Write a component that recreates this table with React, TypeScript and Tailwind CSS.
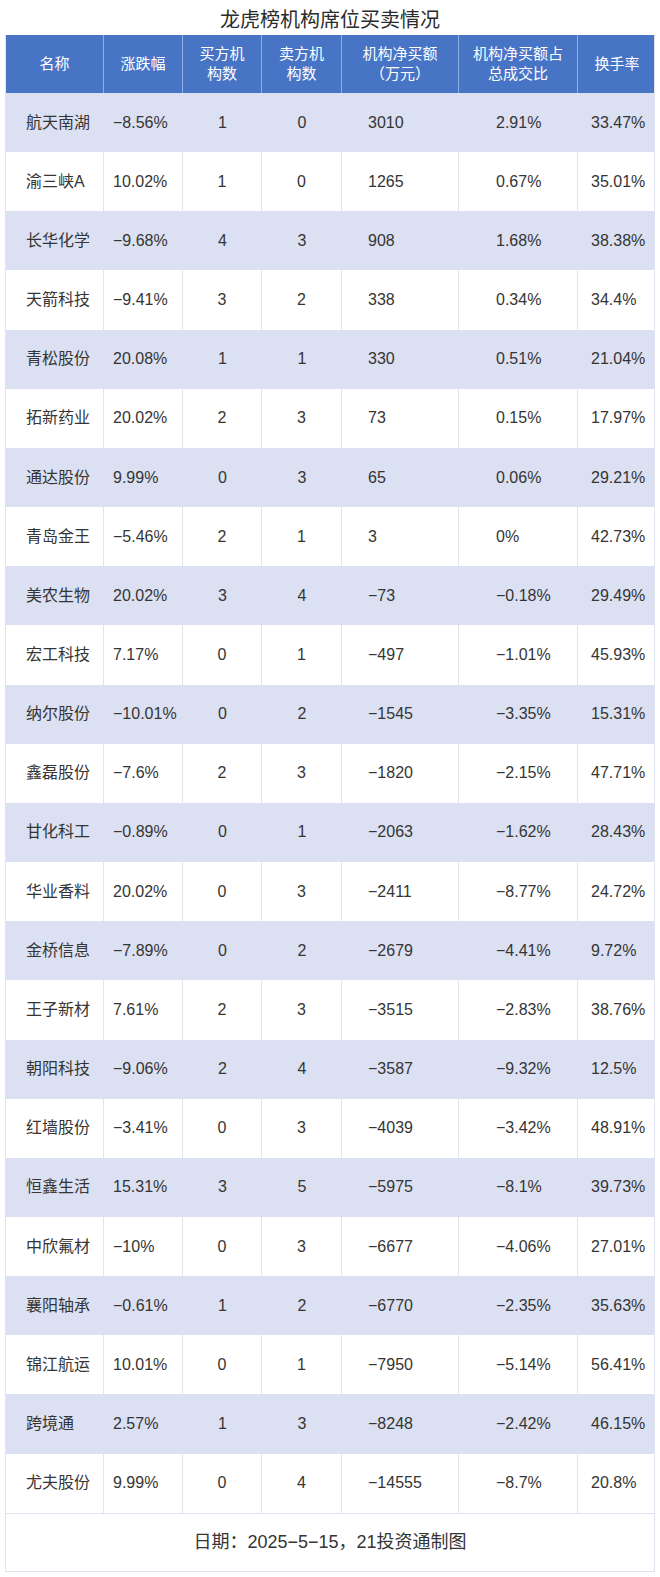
import React from 'react';

const rows: string[][] = [
  ['航天南湖', '−8.56%', '1', '0', '3010', '2.91%', '33.47%'],
  ['渝三峡A', '10.02%', '1', '0', '1265', '0.67%', '35.01%'],
  ['长华化学', '−9.68%', '4', '3', '908', '1.68%', '38.38%'],
  ['天箭科技', '−9.41%', '3', '2', '338', '0.34%', '34.4%'],
  ['青松股份', '20.08%', '1', '1', '330', '0.51%', '21.04%'],
  ['拓新药业', '20.02%', '2', '3', '73', '0.15%', '17.97%'],
  ['通达股份', '9.99%', '0', '3', '65', '0.06%', '29.21%'],
  ['青岛金王', '−5.46%', '2', '1', '3', '0%', '42.73%'],
  ['美农生物', '20.02%', '3', '4', '−73', '−0.18%', '29.49%'],
  ['宏工科技', '7.17%', '0', '1', '−497', '−1.01%', '45.93%'],
  ['纳尔股份', '−10.01%', '0', '2', '−1545', '−3.35%', '15.31%'],
  ['鑫磊股份', '−7.6%', '2', '3', '−1820', '−2.15%', '47.71%'],
  ['甘化科工', '−0.89%', '0', '1', '−2063', '−1.62%', '28.43%'],
  ['华业香料', '20.02%', '0', '3', '−2411', '−8.77%', '24.72%'],
  ['金桥信息', '−7.89%', '0', '2', '−2679', '−4.41%', '9.72%'],
  ['王子新材', '7.61%', '2', '3', '−3515', '−2.83%', '38.76%'],
  ['朝阳科技', '−9.06%', '2', '4', '−3587', '−9.32%', '12.5%'],
  ['红墙股份', '−3.41%', '0', '3', '−4039', '−3.42%', '48.91%'],
  ['恒鑫生活', '15.31%', '3', '5', '−5975', '−8.1%', '39.73%'],
  ['中欣氟材', '−10%', '0', '3', '−6677', '−4.06%', '27.01%'],
  ['襄阳轴承', '−0.61%', '1', '2', '−6770', '−2.35%', '35.63%'],
  ['锦江航运', '10.01%', '0', '1', '−7950', '−5.14%', '56.41%'],
  ['跨境通', '2.57%', '1', '3', '−8248', '−2.42%', '46.15%'],
  ['尤夫股份', '9.99%', '0', '4', '−14555', '−8.7%', '20.8%'],
];

const headers = ['名称', '涨跌幅', '买方机\n构数', '卖方机\n构数', '机构净买额\n（万元）', '机构净买额占\n总成交比', '换手率'];

// per-column alignment of body text, as in the source sheet
const cellAlign = [
  'justify-start pl-[20px]',
  'justify-start pl-[9px]',
  'justify-center',
  'justify-center',
  'justify-start pl-[26px]',
  'justify-start pl-[37px]',
  'justify-start pl-[13px]',
];

const grid = 'grid grid-cols-[98px_79px_79px_80px_117px_119px_78px]';

export default function App() {
  return (
    <div
      className="w-[660px] min-h-[1577px] bg-white text-[#353535]"
      style={{ fontFamily: '"Liberation Sans", "Noto Sans CJK SC", sans-serif' }}
    >
      <h1 className="h-[35px] pt-[7px] text-center text-[20px] leading-[26px] font-normal text-[#2b2b2b]">
        龙虎榜机构席位买卖情况
      </h1>

      <div className="mx-[5px] w-[650px] border-x border-[#dfe3ef]">
        <div className={`${grid} h-[58px] bg-[#4874c6] text-white`}>
          {headers.map((h, i) => (
            <div
              key={i}
              className={`flex items-center justify-center whitespace-pre-line text-center text-[15px] leading-[20px] ${
                i < 6 ? 'border-r border-[#8fb0e6]' : ''
              }`}
            >
              {h}
            </div>
          ))}
        </div>

        {rows.map((r, ri) => {
          const shaded = ri % 2 === 0;
          return (
            <div key={ri} className={`${grid} h-[59.17px] ${shaded ? 'bg-[#dbe0f2]' : 'bg-white'}`}>
              {r.map((v, ci) => (
                <div
                  key={ci}
                  className={`flex items-center text-[16px] ${cellAlign[ci]} ${
                    !shaded && ci < 6 ? 'border-r border-[#e1e4ee]' : ''
                  }`}
                >
                  {v}
                </div>
              ))}
            </div>
          );
        })}

        <div className="flex h-[59px] items-center justify-center border-y border-[#dfe3ef] text-[18px]">
          日期：2025−5−15，21投资通制图
        </div>
      </div>
    </div>
  );
}
